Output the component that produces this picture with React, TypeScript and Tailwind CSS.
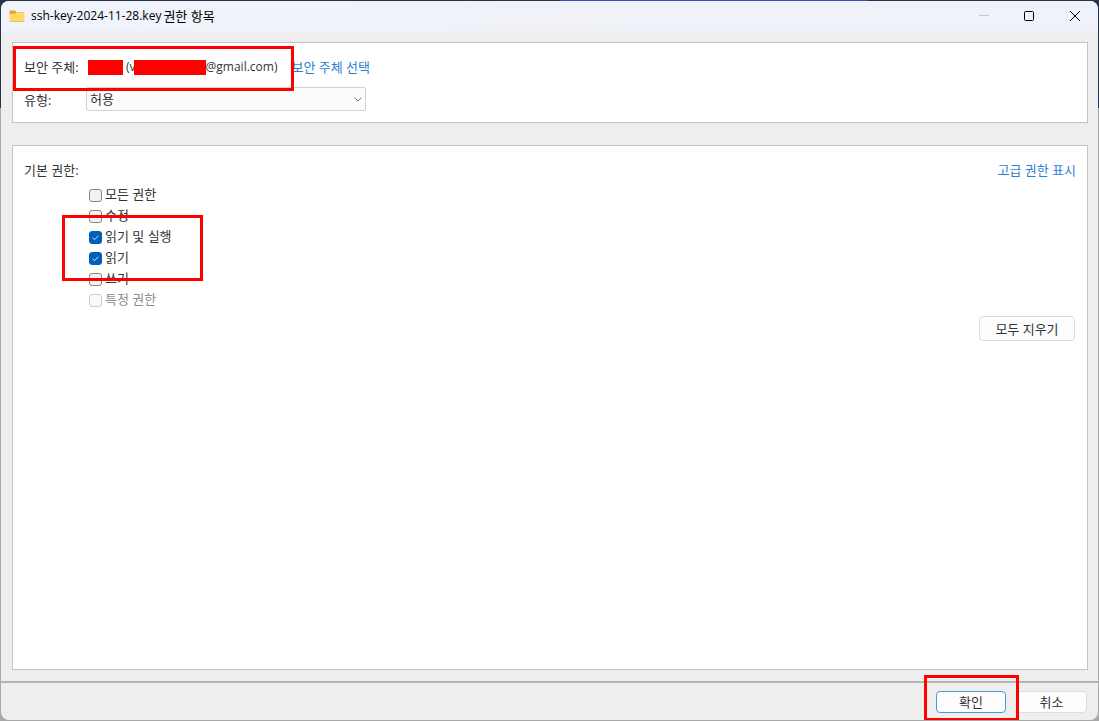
import { ReactNode, useState } from 'react';

interface Permission {
  id: string;
  label: string;
  checked: boolean;
  disabled?: boolean;
}

const initialPermissions: Permission[] = [
  { id: 'full', label: '모든 권한', checked: false },
  { id: 'modify', label: '수정', checked: false },
  { id: 'execute', label: '읽기 및 실행', checked: true },
  { id: 'read', label: '읽기', checked: true },
  { id: 'write', label: '쓰기', checked: false },
  { id: 'special', label: '특정 권한', checked: false, disabled: true },
];

function FolderIcon() {
  return (
    <svg width="16" height="14" viewBox="0 0 16 14" aria-hidden="true">
      <path
        d="M1 1.5h4.2c.5 0 .8.1 1.1.5L7.5 3.2H14c.6 0 1 .4 1 1V6H.5V2c0-.3.2-.5.5-.5z"
        fill="#e8a825"
      />
      <path
        d="M.5 4.8h5.3c.4 0 .7-.1 1-.4l1-.8h6.700c.5 0 .9.4.9.9v7.300c0 .5-.4.9-.9.9H1.400c-.5 0-.9-.4-.9-.9z"
        fill="#ffd868"
      />
      <path d="M.6 12h14.700c-.1.4-.4.7-.8.7H1.400c-.4 0-.7-.3-.8-.7z" fill="#f0b73c" />
    </svg>
  );
}

// 빨간 강조 테두리
function Highlight({ className }: { className: string }) {
  return (
    <div
      className={`pointer-events-none absolute z-10 border-3 border-[#ff0000] ${className}`}
    />
  );
}

function TitleBar() {
  return (
    <header className="flex h-[30px] items-center justify-between bg-linear-to-r from-[#eff3fb] via-[#f0f2f8] to-[#eff2fb] pl-2">
      <h1 className="flex items-center text-black">
        <FolderIcon />
        <span className="ml-1.5 text-xs">ssh-key-2024-11-28.key</span>
        <span className="ml-0.5">권한 항목</span>
      </h1>
      <div className="flex h-full">
        <button
          type="button"
          aria-label="최소화"
          disabled
          className="flex w-[45px] items-center justify-center"
        >
          <svg width="10" height="10" viewBox="0 0 10 10">
            <path d="M0 4.500h10" stroke="#c4c6cb" />
          </svg>
        </button>
        <button
          type="button"
          aria-label="최대화"
          className="flex w-[45px] items-center justify-center"
        >
          <svg width="10" height="10" viewBox="0 0 10 10">
            <rect x=".5" y=".5" width="9" height="9" rx="1" fill="none" stroke="#000" />
          </svg>
        </button>
        <button
          type="button"
          aria-label="닫기"
          className="flex w-[47px] items-center justify-center"
        >
          <svg width="10" height="10" viewBox="0 0 10 10">
            <path d="M0 0l10 10M10 0L0 10" stroke="#000" />
          </svg>
        </button>
      </div>
    </header>
  );
}

function Panel({ className, children }: { className: string; children: ReactNode }) {
  return (
    <section className={`border border-[#c3c3c3] bg-white ${className}`}>{children}</section>
  );
}

function PermissionRow({
  item,
  onToggle,
}: {
  item: Permission;
  onToggle: (id: string) => void;
}) {
  return (
    <label
      htmlFor={item.id}
      className={`flex h-[21px] items-center gap-[3px] ${item.disabled ? 'text-[#8c8c8c]' : ''}`}
    >
      <span className="mt-1 grid size-[13px] shrink-0">
        <input
          id={item.id}
          type="checkbox"
          checked={item.checked}
          disabled={item.disabled}
          onChange={() => onToggle(item.id)}
          className="col-start-1 row-start-1 size-[13px] appearance-none rounded-[3px] border border-[#868686] bg-[#f3f3f3] checked:border-[#005fb8] checked:bg-[#005fb8] disabled:border-[#cdcdcd] disabled:bg-[#f9f9f9]"
        />
        {item.checked && (
          <svg
            viewBox="0 0 13 13"
            className="pointer-events-none col-start-1 row-start-1 size-[13px]"
          >
            <path d="M3.500 6.700l2 2 4-4" fill="none" stroke="#d5e6f6" />
          </svg>
        )}
      </span>
      <span>{item.label}</span>
    </label>
  );
}

function App() {
  const [permissions, setPermissions] = useState(initialPermissions);

  const toggle = (id: string) => {
    setPermissions((prev) =>
      prev.map((item) => (item.id === id ? { ...item, checked: !item.checked } : item)),
    );
  };

  const clearAll = () => {
    setPermissions((prev) => prev.map((item) => ({ ...item, checked: false })));
  };

  return (
    <div className="flex min-h-screen flex-col bg-linear-to-b from-[#2b3247] from-15% to-[#a9a9a9] to-15% px-px pb-px text-[13px] leading-5 text-[#333333] [font-family:'Open_Sans','Noto_Sans_CJK_KR',sans-serif]">
      <div className="ml-[51%] h-px w-[28%] bg-[#3a4fa8]" />
      <div className="flex flex-1 flex-col overflow-hidden rounded-lg bg-[#eeeeee]">
        <TitleBar />

        <main className="flex flex-1 flex-col gap-[22px] pt-[11px] pr-2.5 pb-[11px] pl-[11px]">
          <Panel className="relative flex flex-col gap-2.5 px-[11px] pt-[14px] pb-[11px]">
            <Highlight className="top-[3px] left-0 h-[45px] w-[281px]" />
            <div className="flex h-5 items-center">
              <span className="w-16">보안 주체:</span>
              <span className="h-[15px] w-[35px] bg-[#ff0000]" />
              <span className="ml-[3px] text-xs">(v</span>
              <span className="-ml-0.5 h-[15px] w-[72px] bg-[#ff0000]" />
              <span className="text-xs">@gmail.com)</span>
              <a href="#principal" className="ml-3.5 text-[#2b7fd3]">
                보안 주체 선택
              </a>
            </div>
            <div className="flex items-center">
              <label htmlFor="type" className="w-[62px] pt-0.5">
                유형:
              </label>
              <div className="grid w-[280px] items-center">
                <select
                  id="type"
                  className="col-start-1 row-start-1 h-6 appearance-none rounded-xs border border-[#d2d2d2] bg-[#fcfcfc] px-[3px] leading-5"
                >
                  <option>허용</option>
                  <option>거부</option>
                </select>
                <svg
                  width="8"
                  height="5"
                  viewBox="0 0 8 5"
                  className="pointer-events-none col-start-1 row-start-1 mr-1 justify-self-end"
                >
                  <path d="M.5.5L4 4 7.500.5" fill="none" stroke="#777777" />
                </svg>
              </div>
            </div>
          </Panel>

          <Panel className="flex flex-1 flex-col px-[11px] pt-[14px]">
            <div className="flex items-center justify-between">
              <h2>기본 권한:</h2>
              <a href="#advanced" className="text-[#2b7fd3]">
                고급 권한 표시
              </a>
            </div>
            <div className="relative mt-[3px] ml-[65px] flex flex-col items-start">
              <Highlight className="top-8 -left-[27px] h-[66px] w-[141px]" />
              {permissions.map((item) => (
                <PermissionRow key={item.id} item={item} onToggle={toggle} />
              ))}
            </div>
            <button
              type="button"
              onClick={clearAll}
              className="mt-[7px] mr-px h-[25px] w-24 self-end rounded border border-[#dcdcdc] bg-[#fdfdfd]"
            >
              모두 지우기
            </button>
          </Panel>
        </main>

        <footer className="flex justify-end gap-2.5 border-t-2 border-[#b4b4b4] px-[11px] pt-2 pb-[7px]">
          <div className="relative flex">
            <Highlight className="-top-4 -left-3 h-[46px] w-[95px]" />
            <button
              type="button"
              className="h-[22px] w-[70px] rounded border border-[#4a9ddb] bg-[#fdfdfd] leading-5"
            >
              확인
            </button>
          </div>
          <button
            type="button"
            className="h-[22px] w-[71px] rounded border border-[#dddddd] bg-[#fdfdfd] leading-5"
          >
            취소
          </button>
        </footer>
      </div>
    </div>
  );
}

export default App;
